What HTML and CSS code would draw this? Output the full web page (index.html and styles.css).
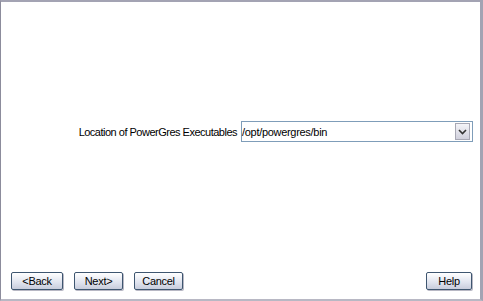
FILE: index.html
```html
<!DOCTYPE html>
<html lang="en">
<head>
<meta charset="UTF-8">
<title>PowerGres Setup</title>
<link rel="stylesheet" href="styles.css">
</head>
<body>
<div class="wizard">
  <div class="content">
    <div class="field-row">
      <label for="exe-path">Location of PowerGres Executables</label>
      <div class="combo">
        <span class="combo-value" id="exe-path">/opt/powergres/bin</span>
        <span class="combo-arrow">
          <svg width="9" height="6" viewBox="0 0 9 6"><path d="M1 1 L4.5 4.5 L8 1" fill="none" stroke="#333" stroke-width="1.6"/></svg>
        </span>
      </div>
    </div>
  </div>
  <div class="buttons">
    <button class="btn btn-back">&lt;Back</button>
    <button class="btn">Next&gt;</button>
    <button class="btn">Cancel</button>
    <span class="spacer"></span>
    <button class="btn btn-help">Help</button>
  </div>
</div>
</body>
</html>
```
FILE: styles.css
```css
/* General styles */
body {
  margin: 0;
  padding: 0;
  background-color: #fff;
  font-family: "Liberation Sans", Arial, sans-serif;
  font-size: 11px;
  color: #000;
}

.wizard {
  box-sizing: border-box;
  width: 483px;
  height: 301px;
  border-top: 2px solid #a3a3b3;
  border-left: 1px solid #8c8c9c;
  border-right: 3px solid #a3a3b3;
  border-bottom: 2px solid #b8b8c4;
  display: flex;
  flex-direction: column;
}

.content {
  flex: 1;
  display: flex;
  align-items: center;
  justify-content: flex-end;
  padding: 0 7px 11px 0;
}

.field-row {
  display: flex;
  align-items: center;
}

.field-row label {
  font-size: 11px;
  letter-spacing: -0.5px;
  margin-right: 4px;
}

.combo {
  display: flex;
  align-items: center;
  width: 230px;
  height: 19px;
  border: 1px solid #7f9db9;
  background-color: #fff;
}

.combo-value {
  flex: 1;
  font-size: 11px;
  letter-spacing: -0.3px;
}

.combo-arrow {
  width: 13px;
  height: 15px;
  margin-right: 2px;
  display: flex;
  align-items: center;
  justify-content: center;
  border: 1px solid #a8a8b4;
  background: linear-gradient(#f4f4f8, #d0d0dc);
}

/* Button styles */
.buttons {
  display: flex;
  align-items: center;
  padding: 0 8px 9px 10px;
  gap: 11px;
}

.spacer {
  flex: 1;
}

.btn {
  font-family: "Liberation Sans", Arial, sans-serif;
  font-size: 11px;
  letter-spacing: -0.3px;
  height: 18px;
  padding: 0;
  border: 1px solid #3e5670;
  border-radius: 2px;
  background: linear-gradient(#ffffff, #dfe3ee 60%, #c8cddc);
  box-shadow: 1px 1px 0 #b8b8c4;
  color: #000;
  width: 49px;
}

.btn-back {
  width: 52px;
}

.btn-help {
  width: 46px;
}
```
